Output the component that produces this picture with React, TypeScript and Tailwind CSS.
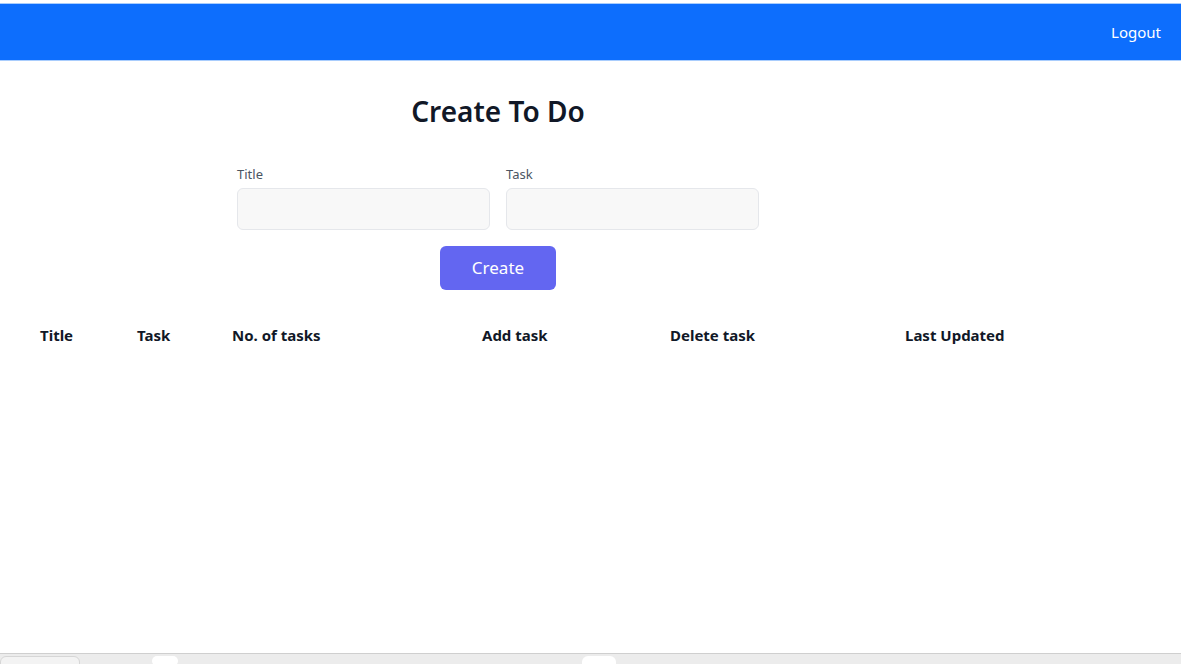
const columns = [
  { label: "Title", w: "w-[97px]" },
  { label: "Task", w: "w-[95px]" },
  { label: "No. of tasks", w: "w-[250px]" },
  { label: "Add task", w: "w-[188px]" },
  { label: "Delete task", w: "w-[235px]" },
  { label: "Last Updated", w: "w-[200px]" },
];

const App = () => {
  return (
    <div className="flex h-[664px] flex-col bg-white font-['Noto_Sans','Open_Sans',sans-serif] text-[#111827]">
      <nav className="mt-[3px] flex h-[58px] items-center justify-end border-y border-[#a9cdfd] bg-[#0d6efd] pr-[20px]">
        <button className="text-[15px] text-white">Logout</button>
      </nav>

      <div className="flex-1">
        <div className="flex w-[996px] flex-col items-center">
          <h1 className="mt-[31px] text-[28px] font-semibold leading-[38px]">Create To Do</h1>
          <form className="mt-[35px] flex flex-col items-center" onSubmit={(e) => e.preventDefault()}>
            <div className="flex gap-[16px]">
              <div className="flex flex-col">
                <label className="text-[13px] leading-[18px] text-[#4b5563]">Title</label>
                <input className="mt-[5px] h-[42px] w-[253px] rounded-md border border-gray-200 bg-[#f8f8f8] px-3 text-sm" />
              </div>
              <div className="flex flex-col">
                <label className="text-[13px] leading-[18px] text-[#4b5563]">Task</label>
                <input className="mt-[5px] h-[42px] w-[253px] rounded-md border border-gray-200 bg-[#f8f8f8] px-3 text-sm" />
              </div>
            </div>
            <button
              type="submit"
              className="mt-[16px] h-[44px] w-[116px] rounded-md bg-[#6366f1] text-[17px] text-white"
            >
              Create
            </button>
          </form>
        </div>

        <div className="mt-[34px] flex pl-[40px]">
          {columns.map((c) => (
            <div key={c.label} className={`${c.w} text-[15px] font-bold leading-[22px]`}>
              {c.label}
            </div>
          ))}
        </div>
      </div>

      <div className="relative h-[11px] border-t border-[#cfcfcf] bg-[#ececec]">
        <div className="absolute left-0 top-[2px] h-[10px] w-[80px] rounded-t-md border border-[#d6d6d6] bg-[#f3f3f3]" />
        <div className="absolute left-[152px] top-[2px] h-[10px] w-[26px] rounded-full bg-white" />
        <div className="absolute left-[582px] top-[2px] h-[10px] w-[34px] rounded-t-md bg-white" />
      </div>
    </div>
  );
};

export default App;
